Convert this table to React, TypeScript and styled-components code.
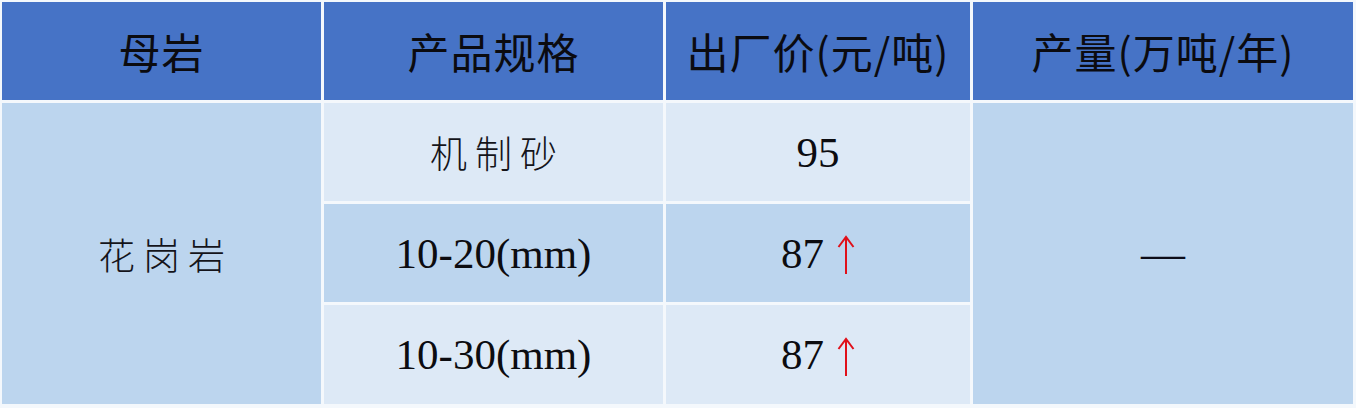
import React from "react";
import styled, { createGlobalStyle } from "styled-components";

const Global = createGlobalStyle`
  html, body { margin: 0; padding: 0; background: #ffffff; }
  body { width: 1356px; height: 408px; overflow: hidden; }
`;

const Table = styled.div`
  display: grid;
  grid-template-columns: 319px 339px 304px 380px;
  grid-template-rows: 98px 98px 98px 99px;
  gap: 3px;
  padding: 2px 3px 4px 2px;
  background: #f4f8fc;
  width: 1356px;
  height: 408px;
  box-sizing: border-box;
`;

const HeadCell = styled.div`
  background: #4673c6;
  display: flex;
  align-items: center;
  justify-content: center;
  color: #0b0b10;
  font-family: "Noto Sans CJK SC", "Liberation Sans", sans-serif;
  font-size: 42px;
  font-weight: 400;
  letter-spacing: 1px;
  padding-bottom: 2px;
`;

const Cell = styled.div<{ $tone: "light" | "mid"; $span?: number }>`
  background: ${(p) => (p.$tone === "light" ? "#dde9f6" : "#bcd5ee")};
  grid-row: ${(p) => (p.$span ? `span ${p.$span}` : "auto")};
  display: flex;
  align-items: center;
  justify-content: center;
  color: #14141a;
`;

const CjkText = styled.span`
  font-family: "Noto Sans CJK SC", sans-serif;
  font-weight: 300;
  font-size: 37px;
  letter-spacing: 8px;
  margin-right: -8px;
`;

const SerifText = styled.span`
  font-family: "Liberation Serif", "Times New Roman", serif;
  font-size: 43px;
  color: #0c0c10;
`;

const Up = styled.svg`
  width: 18px;
  height: 40px;
  margin-left: 13px;
  margin-top: 4px;
  flex: none;
`;

const Dash = styled.span`
  font-family: "Liberation Serif", serif;
  font-size: 44px;
  color: #0c0c18;
`;

function Arrow() {
  return (
    <Up viewBox="0 0 18 40">
      <path d="M9 3 L9 39" stroke="#e0101a" strokeWidth="2" fill="none" />
      <path d="M1.5 12 L9 2 L16.5 12" stroke="#e0101a" strokeWidth="2" fill="none" strokeLinejoin="miter" />
    </Up>
  );
}

export default function App() {
  return (
    <>
      <Global />
      <Table>
        <HeadCell>母岩</HeadCell>
        <HeadCell>产品规格</HeadCell>
        <HeadCell>出厂价(元/吨)</HeadCell>
        <HeadCell>产量(万吨/年)</HeadCell>

        <Cell $tone="mid" $span={3}>
          <CjkText>花岗岩</CjkText>
        </Cell>
        <Cell $tone="light">
          <CjkText>机制砂</CjkText>
        </Cell>
        <Cell $tone="light">
          <SerifText>95</SerifText>
        </Cell>
        <Cell $tone="mid" $span={3}>
          <Dash>—</Dash>
        </Cell>

        <Cell $tone="mid">
          <SerifText>10-20(mm)</SerifText>
        </Cell>
        <Cell $tone="mid">
          <SerifText>87</SerifText>
          <Arrow />
        </Cell>

        <Cell $tone="light">
          <SerifText>10-30(mm)</SerifText>
        </Cell>
        <Cell $tone="light">
          <SerifText>87</SerifText>
          <Arrow />
        </Cell>
      </Table>
    </>
  );
}
